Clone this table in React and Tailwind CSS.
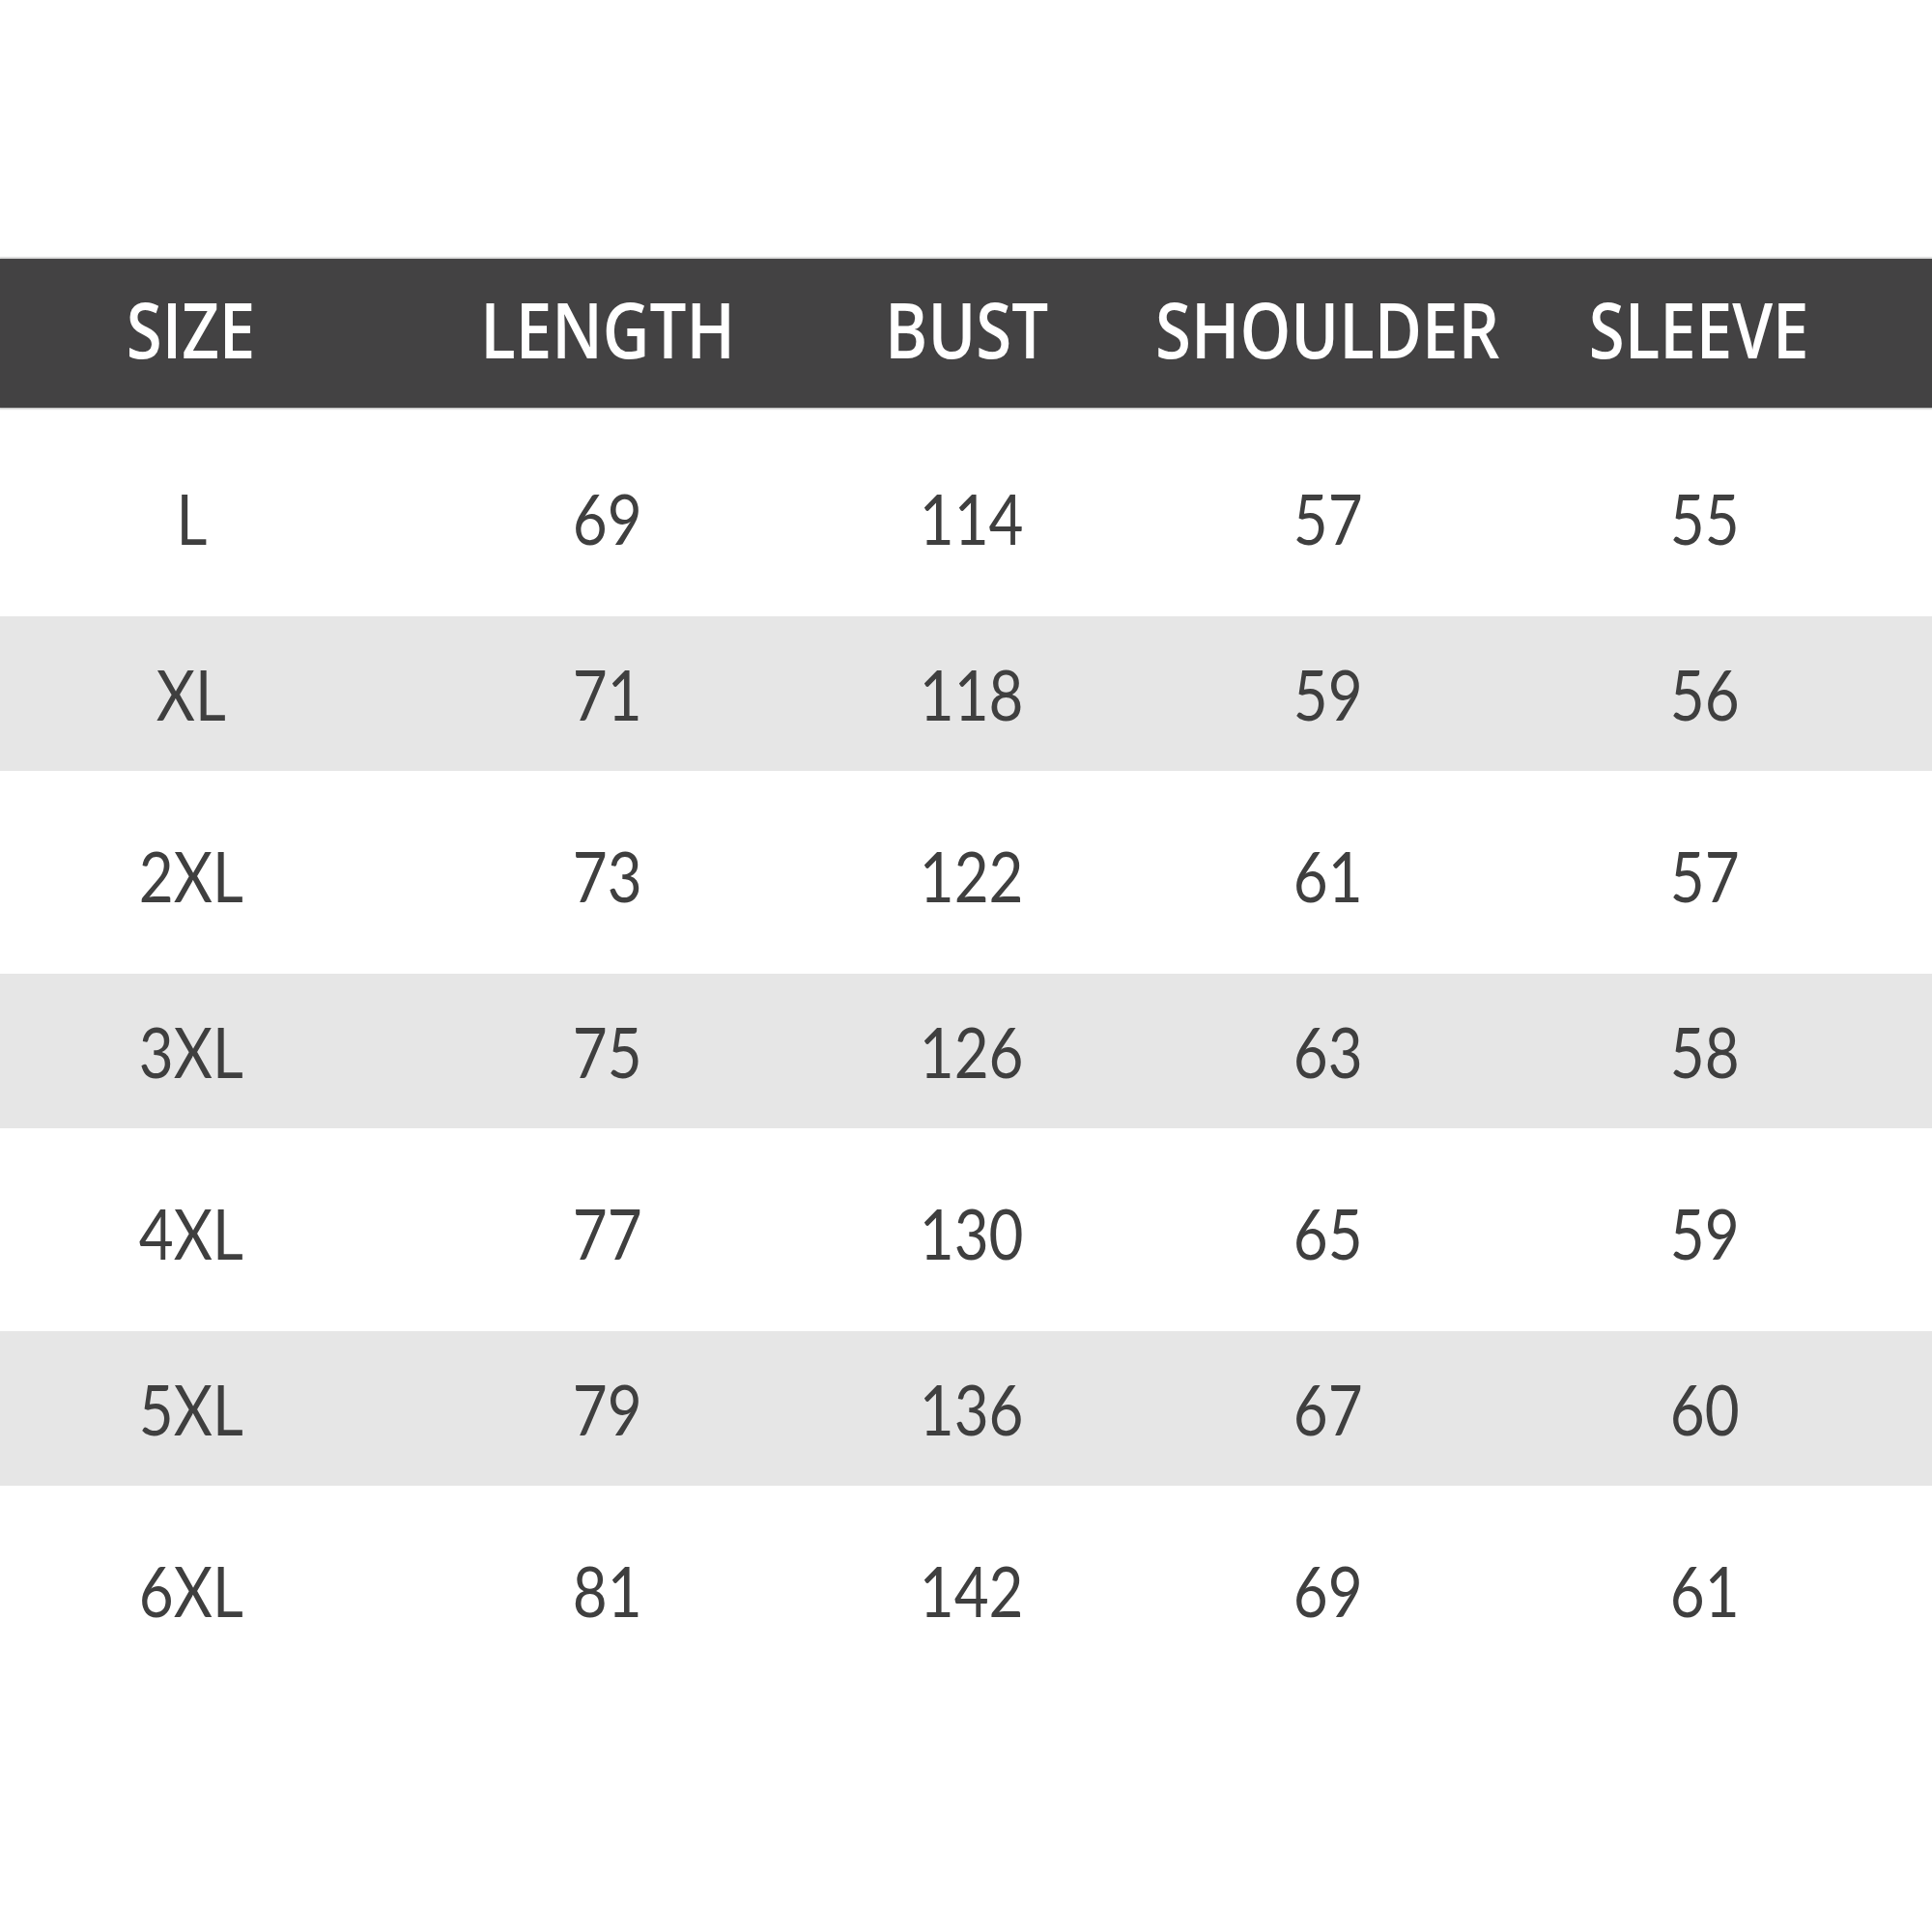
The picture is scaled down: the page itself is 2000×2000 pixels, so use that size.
import React from "react";

const headers = ["SIZE", "LENGTH", "BUST", "SHOULDER", "SLEEVE"];
const rows = [
  ["L", "69", "114", "57", "55"],
  ["XL", "71", "118", "59", "56"],
  ["2XL", "73", "122", "61", "57"],
  ["3XL", "75", "126", "63", "58"],
  ["4XL", "77", "130", "65", "59"],
  ["5XL", "79", "136", "67", "60"],
  ["6XL", "81", "142", "69", "61"],
];

const grid = "grid grid-cols-[396px_466px_278px_468px_300px]";
const dataOffsets = ["", "", "pl-[10px]", "pl-[2px]", "pl-[14px]"];
const headOffsets = ["", "", "", "", "pl-[2px]"];

function Cell({ children, extra, scale }) {
  return (
    <div className={`flex items-center justify-center ${extra}`}>
      <span className={`inline-block whitespace-nowrap ${scale}`}>{children}</span>
    </div>
  );
}

export default function App() {
  return (
    <div className="w-[2000px] h-[2000px] bg-white pt-[268px]">
      <div
        className={`${grid} h-[154px] pb-[10px] bg-[#434243] text-white text-[80px] leading-none font-semibold shadow-[0_0_2px_1px_rgba(0,0,0,0.35)]`}
        style={{ fontFamily: '"Open Sans", "Noto Sans", sans-serif' }}
      >
        {headers.map((h, j) => (
          <Cell key={h} extra={headOffsets[j]} scale="scale-x-[0.84]">
            {h}
          </Cell>
        ))}
      </div>
      <div className="pt-[21px]">
        {rows.map((r, i) => {
          const gray = i % 2 === 1;
          return (
            <div key={r[0]} className={gray ? "h-[185px] pt-[10px] pb-[15px]" : "h-[185px]"}>
              <div
                className={`${grid} h-full ${gray ? "bg-[#e6e6e6]" : "bg-white"} text-[#3f3f3f] text-[72px] leading-none font-normal`}
                style={{ fontFamily: 'Lato, "Open Sans", sans-serif' }}
              >
                {r.map((v, j) => (
                  <Cell key={j} extra={dataOffsets[j]} scale="scale-x-[0.86]">
                    {v}
                  </Cell>
                ))}
              </div>
            </div>
          );
        })}
      </div>
    </div>
  );
}
